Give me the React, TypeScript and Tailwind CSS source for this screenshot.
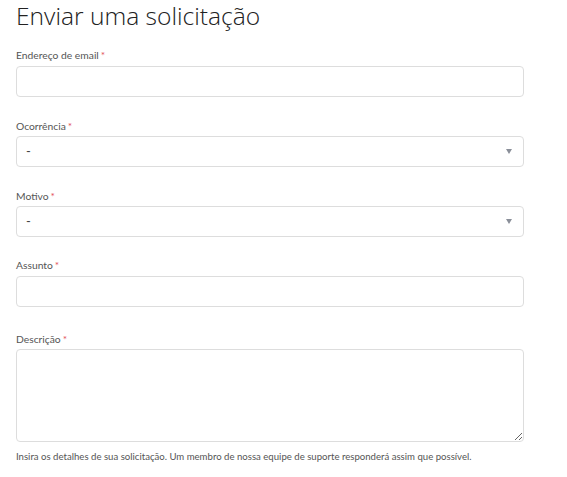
import React from "react";

function Label({ text }: { text: string }) {
  return (
    <label className="block font-['Lato',sans-serif] text-[10.3px] leading-4 text-[#555]">
      {text}
      <span className="ml-[2px] text-[#e3545d]">*</span>
    </label>
  );
}

function TextInput() {
  return (
    <input
      type="text"
      className="block h-[31px] w-full rounded-[4px] border border-[#ddd] bg-white px-2.5 text-[13px] outline-none"
    />
  );
}

function SelectBox() {
  return (
    <div className="flex h-[31px] w-full items-center justify-between rounded-[4px] border border-[#ddd] bg-white pl-[9px] pr-[10px] font-['Lato',sans-serif] text-[13px] text-[#444]">
      <span>-</span>
      <svg width="6" height="5" viewBox="0 0 6 5" className="mr-[1px]">
        <path d="M0 0 L6 0 L3 5 Z" fill="#8a8f99" />
      </svg>
    </div>
  );
}

export default function App() {
  return (
    <div
      className="min-h-[477px] w-[567px] bg-white pl-4 pr-[43px]"
      style={{ fontFamily: '"Open Sans", "Noto Sans", sans-serif' }}
    >
      <h1 className="pt-[1px] text-[24.6px] font-light leading-[30px] text-[#222]">
        Enviar uma solicitação
      </h1>

      <div className="mt-4">
        <Label text="Endereço de email" />
        <div className="mt-[3px]">
          <TextInput />
        </div>
      </div>

      <div className="mt-[21px]">
        <Label text="Ocorrência" />
        <div className="mt-[2px]">
          <SelectBox />
        </div>
      </div>

      <div className="mt-[21px]">
        <Label text="Motivo" />
        <div className="mt-[2px]">
          <SelectBox />
        </div>
      </div>

      <div className="mt-5">
        <Label text="Assunto" />
        <div className="mt-[3px]">
          <TextInput />
        </div>
      </div>

      <div className="mt-[24px]">
        <Label text="Descrição" />
        <textarea className="mt-[2px] block h-[93px] w-full rounded-[4px] border border-[#ddd] bg-white px-2.5 py-1.5 text-[13px] outline-none" />
        <p className="mt-[7px] font-['Lato',sans-serif] text-[9.6px] leading-4 text-[#555]">
          Insira os detalhes de sua solicitação. Um membro de nossa equipe de suporte responderá assim que possível.
        </p>
      </div>
    </div>
  );
}
